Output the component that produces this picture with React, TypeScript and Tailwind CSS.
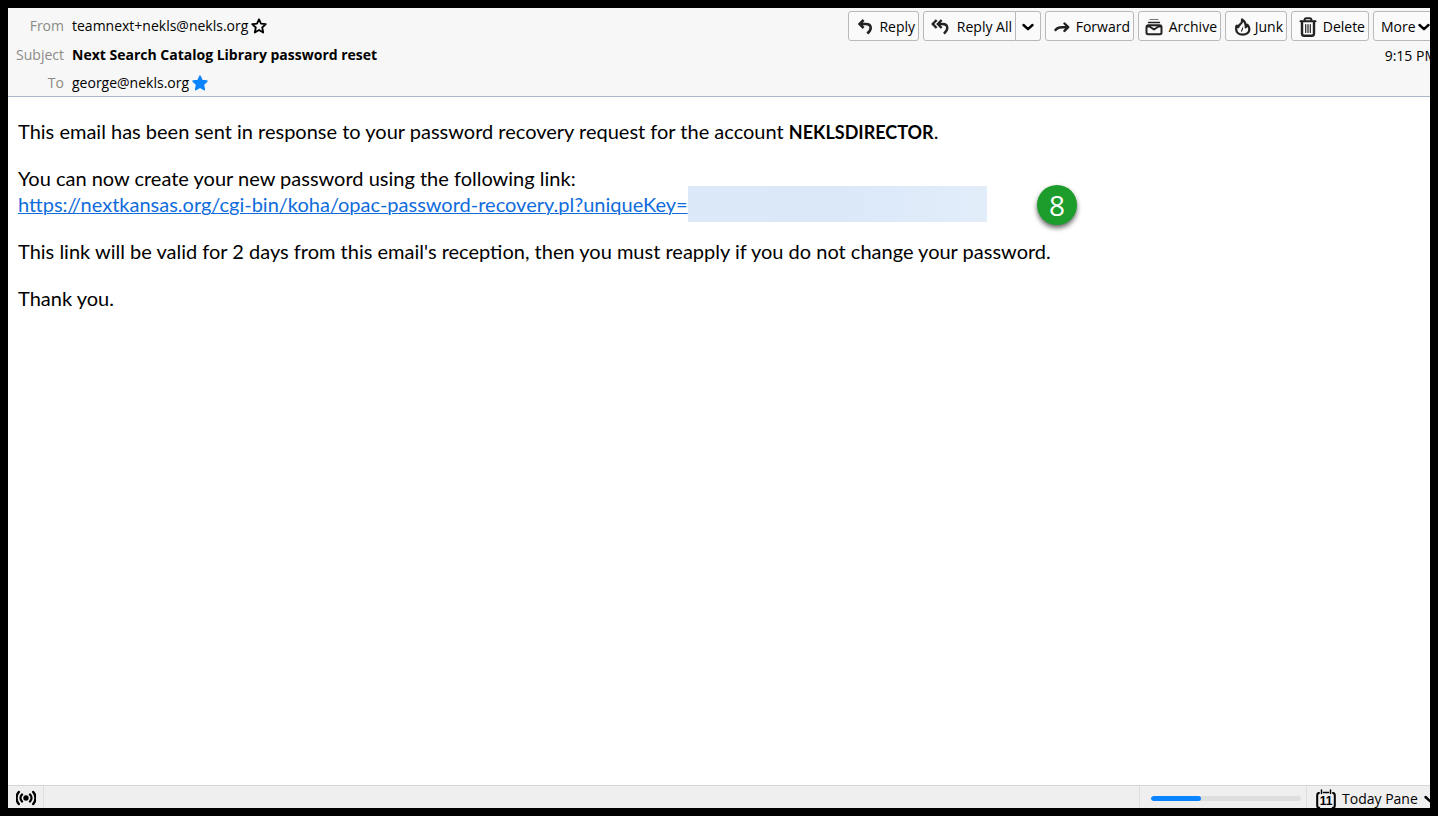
import type { ReactNode } from "react";

const stroke = {
  fill: "none",
  stroke: "currentColor",
  strokeWidth: 2,
  strokeLinecap: "round" as const,
  strokeLinejoin: "round" as const,
  "aria-hidden": true,
};

function ReplyIcon() {
  return (
    <svg className="h-4 w-4 shrink-0" viewBox="0 0 16 16" {...stroke} strokeWidth={2.6} strokeLinecap="butt" strokeLinejoin="miter">
      <path d="M6.600 1 2.600 5l4 4M2.600 5H8.800c3.200 0 4.900 1.500 4.900 4 0 2-1 3.500-3.400 5.600" />
    </svg>
  );
}

function ReplyAllIcon() {
  return (
    <svg className="h-4 w-[18px] shrink-0" viewBox="0 0 18 16" {...stroke} strokeWidth={2.4} strokeLinecap="butt" strokeLinejoin="miter">
      <path d="M5.600 1 1.800 5l3.800 4M10.600 1 6.800 5l3.800 4M7 5H11.400c3.200 0 4.900 1.500 4.900 4 0 2-1 3.500-3.400 5.600" />
    </svg>
  );
}

function ForwardIcon() {
  return (
    <svg className="h-4 w-4 shrink-0" viewBox="0 0 16 16" {...stroke} strokeWidth={2.4}>
      <path d="M1.500 11c1.500-2 3.800-2.800 6.500-2.800h5.500M10.500 4.500l3.700 3.700-3.700 3.700" />
    </svg>
  );
}

function ArchiveIcon() {
  return (
    <svg className="h-[18px] w-[18px] shrink-0" viewBox="0 0 18 18" {...stroke}>
      <path d="M5 1.500h8" strokeWidth="1.200" stroke="#777" />
      <path d="M3.500 4.500h11" strokeWidth="1.400" />
      <path d="M1.500 9.500c0-1.500.8-2.300 2-2.300h11c1.200 0 2 .8 2 2.300v5c0 1-.6 1.700-1.500 1.700H3c-.9 0-1.500-.7-1.500-1.700z" />
      <path d="M2 8.500h2.500L9 11.500l4.500-3H16" />
    </svg>
  );
}

function JunkIcon() {
  return (
    <svg className="h-[18px] w-4 shrink-0" viewBox="0 0 16 18" {...stroke} strokeWidth={2.3}>
      <path d="M7 1.500c.5 2.800-.6 4.200-2 5C3.700 7.300 3.500 8 3.300 9L1.600 7.800C1 9 1.200 10.200 1.200 11.200c0 3.300 2.800 5.500 6.500 5.500 3.800 0 6.700-2.300 6.700-5.600 0-1.900-.8-3.200-2-4.300-.2 1.300-.7 2-1.600 2.400C10.900 6 10 3.200 7 1.500z" />
      <path d="M7.600 10c.3 1.300-1 1.900-1 3.100" strokeWidth="1.200" />
    </svg>
  );
}

function TrashIcon() {
  return (
    <svg className="h-5 w-[18px] shrink-0" viewBox="0 0 18 20" {...stroke}>
      <path d="M1.500 4.200h15M5.500 3.500C5.500 2 6.300 1.200 7.500 1.200h3c1.200 0 2 .8 2 2.300" />
      <path d="M3 5v11.500c0 1.400.7 2.200 2 2.200h8c1.300 0 2-.8 2-2.200V5" strokeWidth="2.400" />
      <path d="M6.700 7.500v8M9 7.500v8M11.300 7.500v8" strokeWidth="1.200" />
    </svg>
  );
}

function ChevronIcon() {
  return (
    <svg className="h-3 w-3 shrink-0" viewBox="0 0 12 12" {...stroke} strokeWidth={2.4}>
      <path d="m1.500 4 4.500 4.200L10.500 4" />
    </svg>
  );
}

function StarIcon({ filled = false }: { filled?: boolean }) {
  return (
    <svg
      className={filled ? "h-4 w-4 fill-[#0a84ff] text-[#0a84ff]" : "h-4 w-4 fill-none"}
      viewBox="0 0 16 16"
      stroke="currentColor"
      strokeWidth="1.800"
      strokeLinejoin="round"
      aria-hidden
    >
      <path d="m8 1.300 2 4.400 4.800.5-3.600 3.300 1 5L8 12l-4.200 2.500 1-5L1.200 6.200 6 5.700z" />
    </svg>
  );
}

function BroadcastIcon() {
  return (
    <svg className="h-4 w-5" viewBox="0 0 20 16" {...stroke} strokeWidth={2.4}>
      <circle cx="10" cy="8" r="2.700" fill="currentColor" stroke="none" />
      <path d="M6 4.500a5 5 0 0 0 0 7M14 4.500a5 5 0 0 1 0 7M2.800 2a9 9 0 0 0 0 12M17.200 2a9 9 0 0 1 0 12" />
    </svg>
  );
}

function CalendarIcon() {
  return (
    <span className="relative flex h-5 w-5 items-end justify-center">
      <svg className="absolute inset-0 h-5 w-5" viewBox="0 0 20 20" {...stroke}>
        <path d="M3 4C1.700 4.200 1.200 5 1.200 6.500v10c0 1.500.8 2.300 2 2.300M17 4c1.300.2 1.800 1 1.800 2.500v10c0 1.500-.8 2.300-2 2.300" />
        <path d="M5.500 1v3.500M14.500 1v3.500" strokeWidth="1.500" />
        <path d="M7.500 3.500h5" strokeWidth="1.500" />
      </svg>
      <span className="font-['Liberation_Sans'] text-xs leading-4 font-bold">11</span>
    </span>
  );
}

const buttonBase =
  "flex h-[30px] shrink-0 items-center rounded-[3px] border border-[#b9b9b9] bg-[#fafafa] pt-px whitespace-nowrap";

function ToolButton({ icon, label, className }: { icon: ReactNode; label: string; className: string }) {
  return (
    <button type="button" className={`${buttonBase} justify-end pr-[3px] ${className}`}>
      <span className="text-[#222]">{icon}</span>
      {label}
    </button>
  );
}

export default function App() {
  return (
    <div className="flex min-h-screen flex-col bg-black p-2 font-['Open_Sans','Noto_Sans',sans-serif] text-sm text-black">
      <div className="flex grow flex-col overflow-hidden bg-white">
        <header className="flex justify-between border-b border-[#a9b6cc] bg-[#f7f7f7] pt-[3px]">
          <dl className="grid grid-cols-[56px_auto] grid-rows-[30px_28px_27px] items-center gap-x-2">
            <dt className="text-right text-[#8b8b86]">From</dt>
            <dd className="flex items-center gap-[3px]">
              teamnext+nekls@nekls.org
              <button type="button" aria-label="Add to address book">
                <StarIcon />
              </button>
            </dd>
            <dt className="text-right text-[#8b8b86]">Subject</dt>
            <dd className="font-bold">Next Search Catalog Library password reset</dd>
            <dt className="text-right text-[#8b8b86]">To</dt>
            <dd className="flex items-center gap-[3px]">
              george@nekls.org
              <button type="button" aria-label="Edit contact">
                <StarIcon filled />
              </button>
            </dd>
          </dl>

          <div className="-mr-2.5 flex flex-col">
            <div className="flex gap-1">
              <ToolButton className="w-[71px] gap-1.5" icon={<ReplyIcon />} label="Reply" />
              <div className="flex">
                <button type="button" className={`${buttonBase} w-[93px] justify-end gap-2 rounded-r-none pr-[3px]`}>
                  <span className="text-[#222]">
                    <ReplyAllIcon />
                  </span>
                  Reply All
                </button>
                <button
                  type="button"
                  aria-label="Reply options"
                  className={`${buttonBase} w-[25px] justify-center rounded-l-none border-l-0`}
                >
                  <ChevronIcon />
                </button>
              </div>
              <ToolButton className="w-[89px] gap-1.5" icon={<ForwardIcon />} label="Forward" />
              <ToolButton className="w-[83px] gap-1.5" icon={<ArchiveIcon />} label="Archive" />
              <ToolButton className="w-[62px] gap-1" icon={<JunkIcon />} label="Junk" />
              <ToolButton className="w-[78px] gap-1.5" icon={<TrashIcon />} label="Delete" />
              <button type="button" className={`${buttonBase} w-[67px] gap-0.5 pl-[7px]`}>
                More
                <ChevronIcon />
              </button>
            </div>
            <time className="self-end pr-[3px] leading-[30px]">9:15 PM</time>
          </div>
        </header>

        <main className="relative flex grow flex-col gap-[21px] px-2.5 pt-[21px] font-['Lato',sans-serif] text-xl leading-[26px]">
          <p>
            This email has been sent in response to your password recovery request for the account{" "}
            <b className="text-lg leading-none">NEKLSDIRECTOR</b>.
          </p>
          <p>
            You can now create your new password using the following link:
            <br />
            <span className="relative">
              <a
                href="https://nextkansas.org/cgi-bin/koha/opac-password-recovery.pl?uniqueKey="
                className="text-[#0f6cdb] underline decoration-1"
              >
                https://nextkansas.org/cgi-bin/koha/opac-password-recovery.pl?uniqueKey=
              </a>
              <span className="absolute -top-1.5 left-full h-9 w-[299px] bg-linear-to-r from-[#dce9f9] via-[#dae8f8] to-[#e3edfa]" />
            </span>
          </p>
          <p>
            This link will be valid for 2 days from this email's reception, then you must reapply if you do not change
            your password.
          </p>
          <p>Thank you.</p>
          <span className="absolute top-[88px] left-[1029px] flex h-10 w-10 items-center justify-center rounded-full bg-[#1b9c2b] font-['Open_Sans',sans-serif] text-[28px] text-white shadow-[0_3px_5px_rgba(0,0,0,0.6)]">
            8
          </span>
        </main>

        <footer className="flex h-[23px] items-stretch border-t border-[#d5d5d5] bg-[#efefef]">
          <div className="flex w-9 items-center justify-center border-r border-[#dedede] pt-0.5">
            <BroadcastIcon />
          </div>
          <div className="grow" />
          <div className="flex w-[168px] items-center border-x border-[#dedede] pt-0.5 pl-[11px]">
            <div
              role="progressbar"
              aria-label="Loading"
              aria-valuenow={33}
              className="h-[5px] w-[150px] overflow-hidden rounded-full bg-[#dedede]"
            >
              <div className="h-full w-1/3 rounded-full bg-[#0a84ff]" />
            </div>
          </div>
          <button type="button" className="-mr-1.5 flex w-[129px] items-center gap-1.5 pt-[3px] pl-[9px] whitespace-nowrap">
            <CalendarIcon />
            Today Pane
            <ChevronIcon />
          </button>
        </footer>
      </div>
    </div>
  );
}
